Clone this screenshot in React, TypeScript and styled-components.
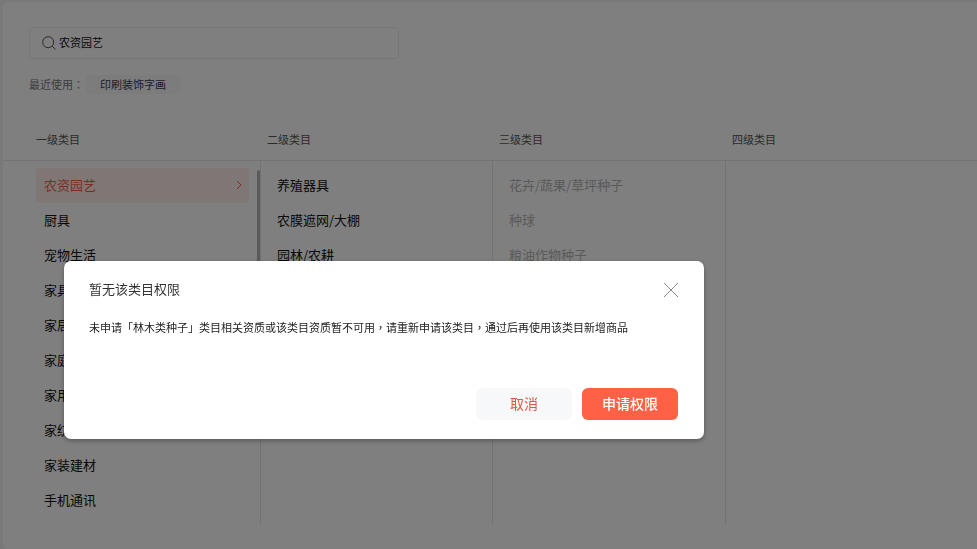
import React, { useState } from "react";
import styled, { createGlobalStyle } from "styled-components";

const GlobalStyle = createGlobalStyle`
  *, *::before, *::after { box-sizing: border-box; }
  body {
    margin: 0;
    background: #f2f2f2;
    color: #111;
    font-family: "Noto Sans CJK SC", sans-serif;
    font-size: 13px;
    overflow: hidden;
  }
  button, input { font: inherit; color: inherit; }
  ul { list-style: none; margin: 0; padding: 0; }
`;

const Page = styled.main`
  min-height: 100vh;
  padding: 2px 0 0 3px;
  display: flex;
`;

const Panel = styled.section`
  flex: 1;
  background: #fff;
  border-radius: 5px 0 0 5px;
  padding: 25px 0 24px;
  display: flex;
  flex-direction: column;
`;

const SearchBox = styled.label`
  display: flex;
  align-items: center;
  gap: 3px;
  width: 38%;
  height: 32px;
  margin-left: 26px;
  padding: 0 12px;
  border: 1px solid #efefef;
  border-radius: 4px;
  color: #555;
`;

const SearchInput = styled.input`
  flex: 1;
  min-width: 0;
  padding: 0 0 2px;
  border: 0;
  outline: 0;
  background: transparent;
  color: #111;
  font-size: 11px;
`;

const Recent = styled.div`
  display: flex;
  align-items: center;
  gap: 2px;
  margin: 16px 0 0 26px;
  height: 19px;
  color: #777;
  font-size: 11px;
  line-height: 18px;
`;

const RecentLabel = styled.span`
  padding-bottom: 2px;
`;

const Tag = styled.button`
  height: 19px;
  padding: 0 14px 1px;
  border: 0;
  border-radius: 3px;
  background: #f8f9fb;
  color: #353c5c;
  font-size: 11px;
  line-height: 18px;
`;

const Grid = styled.div`
  display: grid;
  grid-template-columns: 258fr 232fr 233fr 251fr;
`;

const HeadRow = styled(Grid)`
  margin-top: 26px;
  height: 41px;
  align-items: center;
  border-bottom: 1px solid #e6e6e6;
`;

const Heading = styled.h2<{ $first?: boolean }>`
  margin: 0;
  padding: 0 0 2px ${(p) => (p.$first ? 33 : 6)}px;
  color: #555;
  font-size: 11px;
  font-weight: 400;
  line-height: 18px;
`;

const Columns = styled(Grid)`
  flex: 1;
`;

const Column = styled.div<{ $first?: boolean; $last?: boolean }>`
  display: flex;
  padding: 7px 0 0 ${(p) => (p.$first ? 33 : 8)}px;
  border-right: ${(p) => (p.$last ? 0 : 1)}px solid #e6e6e6;
`;

const List = styled.ul`
  flex: 1;
`;

const Item = styled.button<{ $selected?: boolean }>`
  display: flex;
  align-items: center;
  justify-content: space-between;
  width: 100%;
  height: 35px;
  padding: 0 7px 2px 8px;
  border: 0;
  border-radius: 4px;
  text-align: left;
  line-height: 20px;
  background: ${(p) => (p.$selected ? "#ffeeea" : "transparent")};
  color: ${(p) => (p.$selected ? "#ff5b47" : "#111")};
  &:disabled { color: #b4b4b4; }
`;

const ScrollThumb = styled.div`
  width: 3px;
  height: 120px;
  margin: 2px 0 0 8px;
  border-radius: 2px;
  background: #b5b5b5;
`;

const Overlay = styled.div`
  position: fixed;
  inset: 0;
  padding: 261px 64px 0;
  background: rgba(0, 0, 0, 0.5);
`;

const Dialog = styled.section`
  max-width: 640px;
  padding: 17px 26px 19px 25px;
  border-radius: 7px;
  background: #fff;
  box-shadow: 0 2px 5px rgba(0, 0, 0, 0.3);
`;

const DialogHead = styled.header`
  display: flex;
  align-items: center;
  justify-content: space-between;
  height: 24px;
`;

const Title = styled.h1`
  margin: 0;
  padding-bottom: 2px;
  color: #333;
  font-size: 13px;
  font-weight: 400;
  line-height: 22px;
`;

const Close = styled.button`
  display: flex;
  padding: 0;
  border: 0;
  background: transparent;
  color: #888;
`;

const Message = styled.p`
  margin: 15px 0 0;
  min-height: 71px;
  color: #222;
  font-size: 11px;
  line-height: 20px;
`;

const Punctuation = styled.span`
  font-family: "Noto Sans CJK TC", sans-serif;
`;

const Actions = styled.footer`
  display: flex;
  justify-content: flex-end;
  gap: 10px;
`;

const Action = styled.button<{ $primary?: boolean }>`
  width: 96px;
  height: 32px;
  padding: 0 0 2px;
  border: 0;
  border-radius: 6px;
  font-size: 14px;
  font-weight: ${(p) => (p.$primary ? 500 : 400)};
  line-height: 30px;
  background: ${(p) => (p.$primary ? "#ff6146" : "#f6f8f9")};
  color: ${(p) => (p.$primary ? "#fff" : "#e0583f")};
`;

const SearchIcon = () => (
  <svg width="14" height="14" viewBox="0 0 14 14" fill="none" stroke="currentColor" aria-hidden="true">
    <circle cx="6.2" cy="6.2" r="5.5" />
    <path d="M10.2 10.2 13.6 13.6" />
  </svg>
);

const Chevron = () => (
  <svg width="6" height="10" viewBox="0 0 6 10" fill="none" stroke="currentColor" aria-hidden="true">
    <path d="M1 1 5 5 1 9" />
  </svg>
);

const CloseIcon = () => (
  <svg width="14" height="14" viewBox="0 0 14 14" stroke="currentColor" aria-hidden="true">
    <path d="M0 0 14 14M14 0 0 14" />
  </svg>
);

const headings = ["一级类目", "二级类目", "三级类目", "四级类目"];
const columns = [
  ["农资园艺", "厨具", "宠物生活", "家具", "家居", "家庭", "家用", "家纺", "家装建材", "手机通讯"],
  ["养殖器具", "农膜遮网/大棚", "园林/农耕"],
  ["花卉/蔬果/草坪种子", "种球", "粮油作物种子"],
  [],
];

export default function App() {
  const [query, setQuery] = useState("农资园艺");
  return (
    <>
      <GlobalStyle />
      <Page>
        <Panel>
          <SearchBox>
            <SearchIcon />
            <SearchInput aria-label="搜索类目" value={query} onChange={(e) => setQuery(e.target.value)} />
          </SearchBox>
          <Recent>
            <RecentLabel>最近使用<Punctuation>：</Punctuation></RecentLabel>
            <Tag type="button">印刷装饰字画</Tag>
          </Recent>
          <HeadRow>
            {headings.map((h, i) => (
              <Heading key={h} $first={i === 0}>{h}</Heading>
            ))}
          </HeadRow>
          <Columns>
            {columns.map((items, c) => (
              <Column key={headings[c]} $first={c === 0} $last={c === 3}>
                <List>
                  {items.map((name, i) => (
                    <li key={name}>
                      <Item type="button" $selected={c === 0 && i === 0} disabled={c === 2}>
                        {name}
                        {c === 0 && i === 0 && <Chevron />}
                      </Item>
                    </li>
                  ))}
                </List>
                {c === 0 && <ScrollThumb />}
              </Column>
            ))}
          </Columns>
        </Panel>
      </Page>
      <Overlay>
        <Dialog role="dialog" aria-modal="true" aria-labelledby="dialog-title">
          <DialogHead>
            <Title id="dialog-title">暂无该类目权限</Title>
            <Close type="button" aria-label="关闭"><CloseIcon /></Close>
          </DialogHead>
          <Message>
            未申请「林木类种子」类目相关资质或该类目资质暂不可用<Punctuation>，</Punctuation>请重新申请该类目<Punctuation>，</Punctuation>通过后再使用该类目新增商品
          </Message>
          <Actions>
            <Action type="button">取消</Action>
            <Action type="button" $primary>申请权限</Action>
          </Actions>
        </Dialog>
      </Overlay>
    </>
  );
}
